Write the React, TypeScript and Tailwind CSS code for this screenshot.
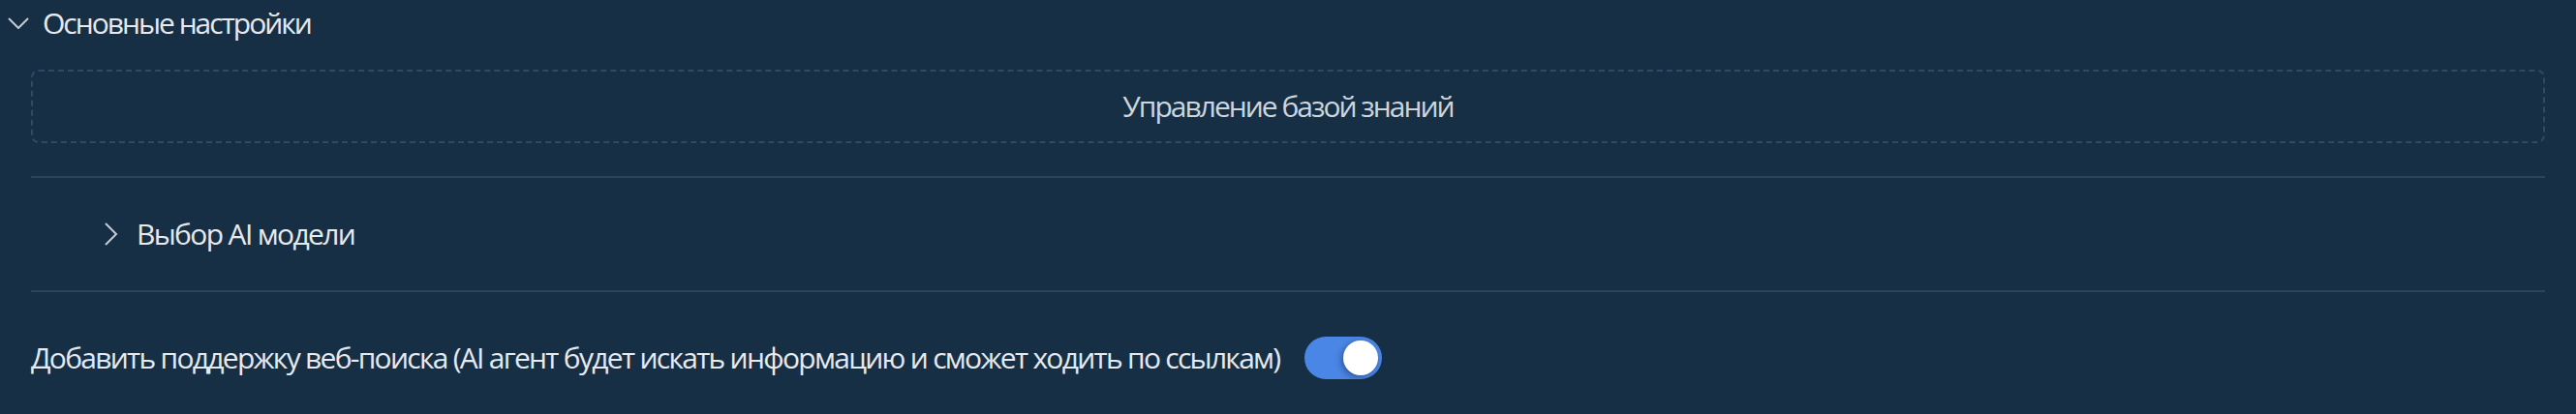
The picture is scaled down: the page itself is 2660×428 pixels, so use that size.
import React from "react";

export default function App() {
  return (
    <div className="w-full h-[428px] bg-[#162f45] text-[#e6eaee] overflow-hidden" style={{ fontFamily: '"Open Sans", "Noto Sans", sans-serif' }}>
      <div className="flex items-center h-[48px] pl-[8px]">
        <svg width="22" height="12" viewBox="0 0 22 12" className="shrink-0">
          <polyline points="1,1 11,11 21,1" fill="none" stroke="#c3ccd5" strokeWidth="2" />
        </svg>
        <span className="ml-[14px] text-[30px] leading-none tracking-[-2px]">Основные настройки</span>
      </div>
      <div className="px-[32px]">
        <div className="mt-[24px] h-[76px] rounded-[8px] border-2 border-dashed border-[#2e4b64] flex items-center justify-center">
          <span className="text-[30px] leading-none tracking-[-2px] text-[#cdd5dd]">Управление базой знаний</span>
        </div>
        <div className="mt-[34px] h-[2px] bg-[#29445c]" />
        <div className="h-[116px] flex items-center pl-[76px]">
          <svg width="14" height="24" viewBox="0 0 14 24" className="shrink-0">
            <polyline points="1,1 12,12 1,23" fill="none" stroke="#c3ccd5" strokeWidth="2" />
          </svg>
          <span className="ml-[19px] text-[30px] leading-none tracking-[-1.65px]">Выбор AI модели</span>
        </div>
        <div className="h-[2px] bg-[#29445c]" />
        <div className="flex items-center mt-[46px] h-[44px]">
          <span className="text-[30px] leading-none tracking-[-1.72px]">Добавить поддержку веб-поиска (AI агент будет искать информацию и сможет ходить по ссылкам)</span>
          <div className="ml-[25px] w-[80px] h-[44px] rounded-full bg-[#4a86e6] relative shrink-0">
            <div className="absolute right-[4px] top-[4px] w-[36px] h-[36px] rounded-full bg-white shadow-[-2px_2px_6px_rgba(0,0,0,0.35)]" />
          </div>
        </div>
      </div>
    </div>
  );
}
